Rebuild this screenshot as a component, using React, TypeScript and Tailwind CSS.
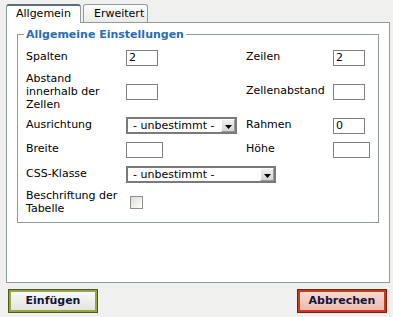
import { ReactNode } from 'react'

function TextBox({ value = '', w = 'w-[32px]' }: { value?: string; w?: string }) {
  return (
    <div className={`${w} h-[16px] border border-[#7f7f7f] bg-white pl-[2px] leading-[14px]`}>
      {value}
    </div>
  )
}

function Select({ w }: { w: string }) {
  return (
    <div className={`${w} h-[17px] border-2 border-[#7a7a7a] bg-white flex items-stretch`}>
      <span className="flex-1 pl-[5px] leading-[13px]">- unbestimmt -</span>
      <span className="w-[14px] border border-[#fff] border-r-[#9a9a9a] border-b-[#9a9a9a] bg-gradient-to-b from-[#f0f0f0] to-[#d4d4d4] flex items-end justify-center pb-[2px]">
        <svg width="7" height="4" viewBox="0 0 7 4">
          <path d="M0 0h7L3.5 4z" fill="#000" />
        </svg>
      </span>
    </div>
  )
}

function Row({ h, children }: { h: string; children: ReactNode }) {
  return <div className={`grid grid-cols-[100px_120px_87px_1fr] items-center ${h}`}>{children}</div>
}

export default function App() {
  return (
    <div className="w-[393px] h-[317px] bg-[#f0f0ee] text-[11px] text-black font-['DejaVu_Sans',sans-serif] overflow-hidden">
      <div className="pl-[6px] pr-[3px] pt-[4px]">
        {/* Tabs */}
        <div className="flex items-end gap-[2px] h-[18px] relative z-10">
          <div className="w-[75px] h-[19px] -mb-px rounded-t-[3px] border border-[#919b9c] border-t-2 border-t-[#5b6b7d] border-b-0 bg-white pl-[9px] leading-[16px]">
            Allgemein
          </div>
          <div className="w-[65px] h-[18px] rounded-t-[3px] border border-[#919b9c] border-b-0 bg-gradient-to-b from-[#fcfcfc] to-[#ebebe6] pl-[10px] leading-[17px]">
            Erweitert
          </div>
        </div>

        {/* Panel */}
        <div className="h-[261px] border border-[#919b9c] bg-white px-[10px] pt-[5px]">
          <fieldset className="border border-[#919b9c] px-0 pb-[4px]">
            <legend className="ml-[6px] px-[2px] font-bold text-[#2b6cb3] leading-[13px]">
              Allgemeine Einstellungen
            </legend>
            <div className="pl-[8px] pt-[5px]">
              <Row h="h-[23px]">
                <span>Spalten</span>
                <TextBox value="2" />
                <span>Zeilen</span>
                <TextBox value="2" />
              </Row>
              <Row h="h-[45px]">
                <span className="leading-[13px]">
                  Abstand
                  <br />
                  innerhalb der
                  <br />
                  Zellen
                </span>
                <TextBox />
                <span>Zellenabstand</span>
                <TextBox />
              </Row>
              <Row h="h-[23px]">
                <span>Ausrichtung</span>
                <Select w="w-[111px]" />
                <span>Rahmen</span>
                <TextBox value="0" />
              </Row>
              <Row h="h-[25px]">
                <span>Breite</span>
                <TextBox w="w-[37px]" />
                <span>Höhe</span>
                <TextBox w="w-[37px]" />
              </Row>
              <Row h="h-[24px]">
                <span>CSS-Klasse</span>
                <div className="col-span-3">
                  <Select w="w-[150px]" />
                </div>
              </Row>
              <Row h="h-[32px]">
                <span className="leading-[13px]">
                  Beschriftung der
                  <br />
                  Tabelle
                </span>
                <div className="pl-[4px]">
                  <div className="w-[13px] h-[13px] border border-[#8e8f8f] bg-gradient-to-br from-[#dcdcd7] to-[#ffffff]" />
                </div>
              </Row>
            </div>
          </fieldset>
        </div>
      </div>

      {/* Buttons */}
      <div className="flex justify-between pl-[8px] pr-[6px] pt-[6px]">
        <button className="w-[90px] h-[24px] border border-[#4f5720] shadow-[inset_0_0_0_2px_#97a83b] bg-gradient-to-b from-[#fbfbf8] to-[#e2e2dc] font-bold text-[#10163a] leading-[20px]">
          Einfügen
        </button>
        <button className="w-[90px] h-[24px] border border-[#7a1f0e] shadow-[inset_0_0_0_2px_#c93a1c] bg-gradient-to-b from-[#f8dcd5] to-[#edb6aa] font-bold text-[#10163a] leading-[20px]">
          Abbrechen
        </button>
      </div>
    </div>
  )
}
